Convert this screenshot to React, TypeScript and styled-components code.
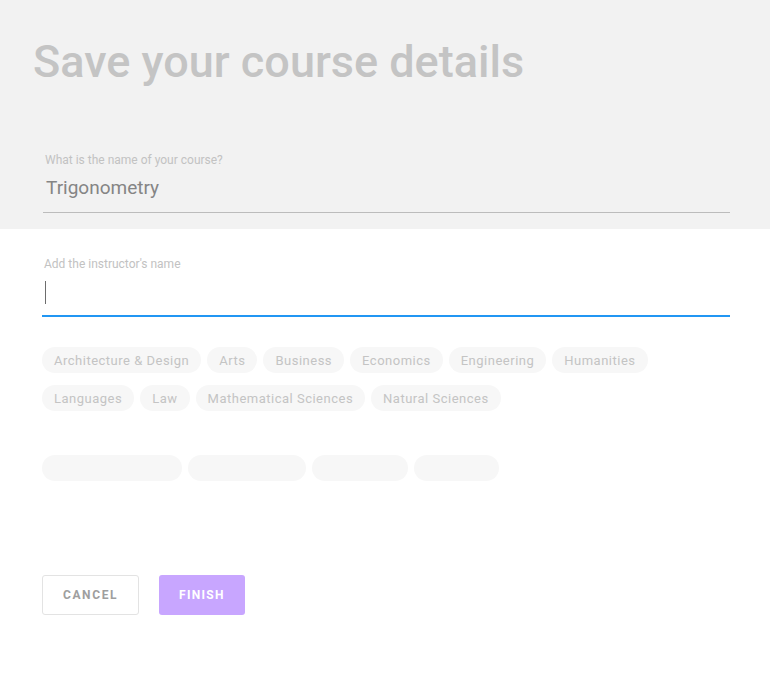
import React from "react";
import styled, { createGlobalStyle } from "styled-components";

const Global = createGlobalStyle`
  html, body { margin: 0; padding: 0; background: #ffffff; }
  body { font-family: Roboto, "Noto Sans", sans-serif; }
  * { box-sizing: border-box; }
`;

const Page = styled.div`
  width: 770px;
  min-height: 680px;
  background: #ffffff;
`;

const Header = styled.header`
  background: #f2f2f2;
  height: 229px;
  padding: 34px 40px 0 33px;
  display: flex;
  flex-direction: column;
`;

const Title = styled.h1`
  margin: 0;
  font-family: Roboto, sans-serif;
  font-weight: 500;
  font-size: 45px;
  line-height: 56px;
  color: #c4c4c4;
`;

const Field = styled.div<{ $offset?: number; $top?: number }>`
  display: flex;
  flex-direction: column;
  margin-left: ${(p) => p.$offset ?? 0}px;
  margin-top: ${(p) => p.$top ?? 0}px;
`;

const Label = styled.label`
  font-size: 12px;
  line-height: 14px;
  color: #c2c2c2;
  padding-left: 2px;
`;

const Value = styled.div<{ $active?: boolean }>`
  height: 46px;
  font-size: 19px;
  line-height: 28px;
  color: #858585;
  padding: ${(p) => (p.$active ? "10px 3px 0" : "7px 3px 0")};
  border-bottom: ${(p) => (p.$active ? "2px solid #2196f3" : "1px solid #bcbcbc")};
  display: flex;
  align-items: flex-start;
`;

const Caret = styled.span`
  display: block;
  width: 1px;
  height: 23px;
  background: #6d6d6d;
`;

const Body = styled.main`
  padding: 28px 40px 0 42px;
  display: flex;
  flex-direction: column;
`;

const ChipGrid = styled.div`
  display: flex;
  flex-wrap: wrap;
  gap: 12px 6px;
  margin-top: 30px;
  width: 620px;
`;

const Chip = styled.span`
  display: inline-flex;
  align-items: center;
  height: 26px;
  padding: 0 12px;
  border-radius: 13px;
  background: #f7f7f7;
  color: #c4c4c4;
  font-size: 13px;
  letter-spacing: 0.5px;
`;

const SkeletonRow = styled.div`
  display: flex;
  gap: 6px;
  margin-top: 44px;
`;

const Skeleton = styled.span<{ $w: number }>`
  display: block;
  width: ${(p) => p.$w}px;
  height: 26px;
  border-radius: 13px;
  background: #f7f7f7;
`;

const Actions = styled.div`
  display: flex;
  gap: 20px;
  margin-top: 94px;
`;

const Button = styled.button<{ $primary?: boolean }>`
  height: 40px;
  padding: 0 20px;
  border-radius: 3px;
  border: ${(p) => (p.$primary ? "none" : "1px solid #e3e3e3")};
  background: ${(p) => (p.$primary ? "#c8a6ff" : "#ffffff")};
  color: ${(p) => (p.$primary ? "#ffffff" : "#9e9e9e")};
  font-family: Roboto, sans-serif;
  font-weight: 700;
  font-size: 12px;
  letter-spacing: ${(p) => (p.$primary ? "1.3px" : "1.6px")};
  text-transform: uppercase;
  cursor: pointer;
`;

const categories = [
  "Architecture & Design",
  "Arts",
  "Business",
  "Economics",
  "Engineering",
  "Humanities",
  "Languages",
  "Law",
  "Mathematical Sciences",
  "Natural Sciences",
];

const skeletons = [140, 118, 96, 85];

export default function App() {
  return (
    <Page>
      <Global />
      <Header>
        <Title>Save your course details</Title>
        <Field $offset={10} $top={63}>
          <Label>What is the name of your course?</Label>
          <Value>Trigonometry</Value>
        </Field>
      </Header>
      <Body>
        <Field>
          <Label>Add the instructor's name</Label>
          <Value $active>
            <Caret />
          </Value>
        </Field>
        <ChipGrid>
          {categories.map((c) => (
            <Chip key={c}>{c}</Chip>
          ))}
        </ChipGrid>
        <SkeletonRow>
          {skeletons.map((w, i) => (
            <Skeleton key={i} $w={w} />
          ))}
        </SkeletonRow>
        <Actions>
          <Button>Cancel</Button>
          <Button $primary>Finish</Button>
        </Actions>
      </Body>
    </Page>
  );
}
